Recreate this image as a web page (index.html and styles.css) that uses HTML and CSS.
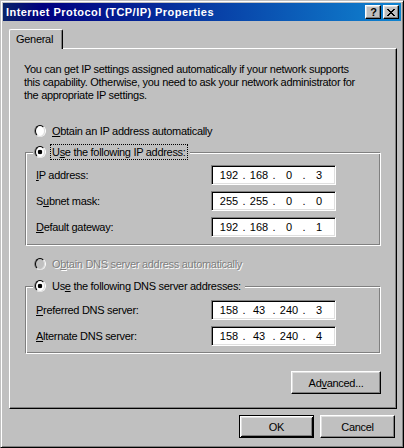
FILE: index.html
```html
<!DOCTYPE html>
<html>
<head>
<meta charset="utf-8">
<link rel="stylesheet" href="styles.css">
</head>
<body>
<div class="window">
  <div class="titlebar">
    <span class="title">Internet Protocol (TCP/IP) Properties</span>
    <div class="tbtns">
      <div class="tbtn help">?</div>
      <div class="tbtn close">
        <svg width="8" height="7" viewBox="0 0 8 7" shape-rendering="crispEdges">
          <path fill="#000" d="M0 0h2v1H0zM6 0h2v1H6zM1 1h2v1H1zM5 1h2v1H5zM2 2h4v1H2zM3 3h2v1H3zM2 4h4v1H2zM1 5h2v1H1zM5 5h2v1H5zM0 6h2v1H0zM6 6h2v1H6z"/>
        </svg>
      </div>
    </div>
  </div>
  <div class="client">
    <div class="tabs"><div class="tab">General</div></div>
    <div class="panel">
      <p class="desc">You can get IP settings assigned automatically if your network supports<br>this capability. Otherwise, you need to ask your network administrator for<br>the appropriate IP settings.</p>

      <div class="radio-row r1"><span class="radio"></span><span class="rlabel"><u>O</u>btain an IP address automatically</span></div>

      <div class="group g1">
        <div class="legend"><span class="radio checked"></span><span class="rlabel focus">U<u>s</u>e the following IP address:</span></div>
        <div class="frow first1"><span class="flabel"><u>I</u>P address:</span>
          <div class="ip"><span class="seg">192</span><span class="dot">.</span><span class="seg">168</span><span class="dot">.</span><span class="seg">0</span><span class="dot">.</span><span class="seg">3</span></div></div>
        <div class="frow"><span class="flabel">S<u>u</u>bnet mask:</span>
          <div class="ip"><span class="seg">255</span><span class="dot">.</span><span class="seg">255</span><span class="dot">.</span><span class="seg">0</span><span class="dot">.</span><span class="seg">0</span></div></div>
        <div class="frow"><span class="flabel"><u>D</u>efault gateway:</span>
          <div class="ip"><span class="seg">192</span><span class="dot">.</span><span class="seg">168</span><span class="dot">.</span><span class="seg">0</span><span class="dot">.</span><span class="seg">1</span></div></div>
      </div>

      <div class="radio-row r3 disabled"><span class="radio"></span><span class="rlabel">O<u>b</u>tain DNS server address automatically</span></div>

      <div class="group g2">
        <div class="legend"><span class="radio checked"></span><span class="rlabel">Us<u>e</u> the following DNS server addresses:</span></div>
        <div class="frow first2"><span class="flabel"><u>P</u>referred DNS server:</span>
          <div class="ip"><span class="seg">158</span><span class="dot">.</span><span class="seg">43</span><span class="dot">.</span><span class="seg">240</span><span class="dot">.</span><span class="seg">3</span></div></div>
        <div class="frow"><span class="flabel"><u>A</u>lternate DNS server:</span>
          <div class="ip"><span class="seg">158</span><span class="dot">.</span><span class="seg">43</span><span class="dot">.</span><span class="seg">240</span><span class="dot">.</span><span class="seg">4</span></div></div>
      </div>

      <button class="btn adv">Ad<u>v</u>anced...</button>
    </div>
    <div class="actions">
      <button class="btn default">OK</button>
      <button class="btn">Cancel</button>
    </div>
  </div>
</div>
</body>
</html>
```

FILE: styles.css
```css
* { box-sizing: border-box; }
html, body { margin: 0; padding: 0; }
body {
  width: 404px;
  height: 448px;
  overflow: hidden;
  background: #c0c0c0;
  font-family: "Liberation Sans", Arial, sans-serif;
  font-size: 11px;
  letter-spacing: -0.3px;
  color: #000;
}
u { text-decoration: underline; text-underline-offset: 1px; }

.window {
  width: 404px;
  height: 448px;
  background: #c0c0c0;
  border: 1px solid;
  border-color: #c0c0c0 #000 #000 #c0c0c0;
  box-shadow: inset 1px 1px #fff, inset -1px -1px #808080;
  padding: 2px;
  display: flex;
  flex-direction: column;
}

.titlebar {
  height: 18px;
  flex: none;
  display: flex;
  align-items: center;
  padding: 0 2px 0 3px;
  background: linear-gradient(to right, #0a246a 0%, #000080 10%, #1084d0 100%);
  color: #fff;
}
.title {
  font-weight: bold;
  font-size: 11px;
  letter-spacing: 0.45px;
  line-height: 14px;
  white-space: nowrap;
}
.tbtns { margin-left: auto; display: flex; gap: 2px; }
.tbtn {
  width: 16px;
  height: 14px;
  background: #c0c0c0;
  border: 1px solid;
  border-color: #fff #000 #000 #fff;
  box-shadow: inset -1px -1px #808080, inset 1px 1px #dfdfdf;
  display: flex;
  align-items: center;
  justify-content: center;
  color: #000;
}
.help { font-weight: bold; font-size: 11px; letter-spacing: 0; line-height: 12px; padding-left: 1px; }
.close svg { display: block; margin-top: 1px; }

.client {
  flex: 1;
  display: flex;
  flex-direction: column;
  padding: 8px 4px 0 6px;
}
.tabs { height: 19px; display: flex; align-items: flex-start; }
.tab {
  position: relative;
  z-index: 1;
  width: 54px;
  height: 20px;
  background: #c0c0c0;
  border-left: 1px solid #fff;
  border-top: 1px solid #fff;
  border-right: 1px solid #000;
  border-radius: 2px 2px 0 0;
  box-shadow: inset -1px 0 #808080;
  padding: 2px 0 0 6px;
  line-height: 14px;
}
.panel {
  width: 388px;
  height: 361px;
  flex: none;
  border: 1px solid;
  border-color: #fff #000 #000 #fff;
  box-shadow: inset -1px -1px #808080;
  display: flex;
  flex-direction: column;
  align-items: flex-start;
}
.desc {
  margin: 14px 0 0 14px;
  line-height: 13px;
  white-space: nowrap;
}

.radio-row {
  height: 16px;
  display: flex;
  align-items: center;
  margin-left: 24px;
}
.r1 { margin-top: 21px; }
.r3 { margin-top: 10px; }

.radio {
  flex: none;
  width: 12px;
  height: 12px;
  border-radius: 50%;
  border: 1px solid;
  border-color: #808080 #fff #fff #808080;
  display: flex;
  align-items: center;
  justify-content: center;
}
.radio::before {
  content: "";
  width: 10px;
  height: 10px;
  border-radius: 50%;
  border: 1px solid;
  border-color: #000 #dfdfdf #dfdfdf #000;
  background: #fff;
}
.radio.checked::before {
  background: radial-gradient(circle, #000 0 2px, #fff 2.6px);
}
.disabled .radio::before { background: #c0c0c0; }
.disabled .rlabel { color: #808080; text-shadow: 1px 1px 0 #fff; }

.rlabel {
  margin-left: 4px;
  height: 16px;
  line-height: 14px;
  padding: 0 1px;
  border: 1px solid transparent;
  white-space: nowrap;
}
.rlabel.focus { border: 1px dotted #000; }

.group {
  width: 356px;
  margin-left: 15px;
  border: 1px solid;
  border-color: #808080 #fff #fff #808080;
  box-shadow: inset 1px 1px #fff, inset -1px -1px #808080;
  display: flex;
  flex-direction: column;
  align-items: flex-start;
}
.g1 { margin-top: 13px; padding-bottom: 8px; }
.g2 { margin-top: 14px; padding-bottom: 7px; }
.legend {
  height: 16px;
  margin: -9px 0 0 7px;
  padding: 0 2px 0 1px;
  background: #c0c0c0;
  display: flex;
  align-items: center;
}
.frow {
  height: 20px;
  margin: 6px 0 0 10px;
  display: flex;
  align-items: center;
}
.frow.first1 { margin-top: 5px; }
.frow.first2 { margin-top: 6px; }
.flabel { width: 175px; white-space: nowrap; }
.ip {
  width: 125px;
  height: 20px;
  background: #fff;
  border: 1px solid;
  border-color: #808080 #fff #fff #808080;
  box-shadow: inset 1px 1px #000, inset -1px -1px #dfdfdf;
  padding-left: 5px;
  display: flex;
  align-items: center;
  line-height: 14px;
  letter-spacing: 0;
}
.seg { width: 24px; text-align: center; }
.dot { width: 6px; text-align: center; }

.btn {
  font-family: inherit;
  font-size: 11px;
  letter-spacing: -0.3px;
  color: #000;
  background: #c0c0c0;
  height: 23px;
  padding: 0;
  border: 1px solid;
  border-color: #fff #000 #000 #fff;
  box-shadow: inset -1px -1px #808080, inset 1px 1px #dfdfdf;
  border-radius: 0;
}
.adv {
  width: 90px;
  margin: 17px 0 0 281px;
}
.actions {
  margin-top: 6px;
  padding-right: 2px;
  display: flex;
  justify-content: flex-end;
  gap: 6px;
}
.actions .btn { width: 75px; }
.btn.default {
  border-color: #000;
  box-shadow: inset 1px 1px #fff, inset -1px -1px #000, inset 2px 2px #dfdfdf, inset -2px -2px #808080;
}
```
